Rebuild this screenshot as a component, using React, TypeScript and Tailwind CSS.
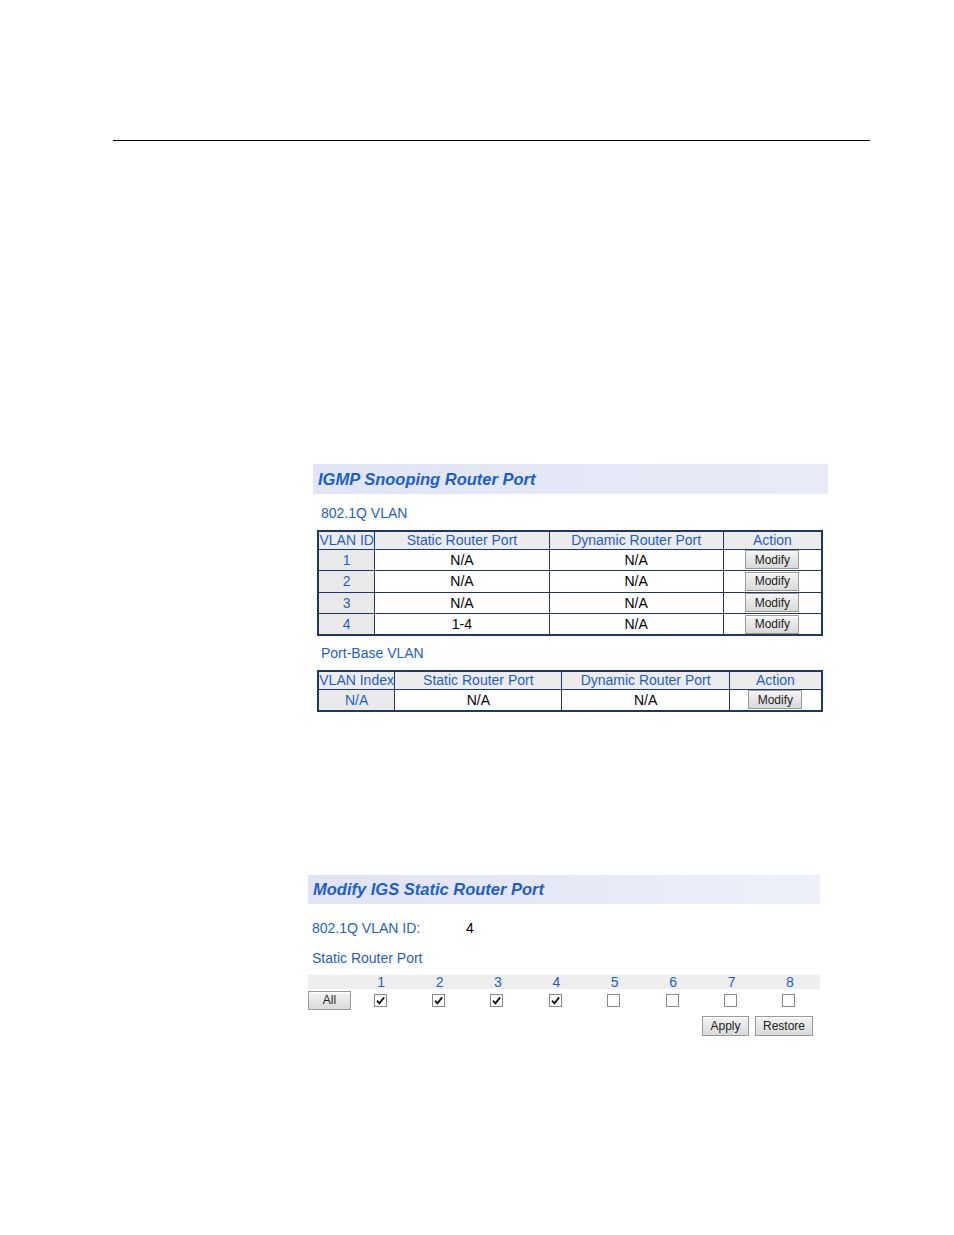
import React from "react";

const blue = "text-[#1c5fcc]";

function Btn({ label, className = "" }: { label: string; className?: string }) {
  return (
    <button
      className={`border border-[#9a9a9a] bg-gradient-to-b from-[#f4f4f4] to-[#d9d9d9] text-[12px] text-[#222] leading-none shadow-[inset_0_1px_0_#fff] ${className}`}
    >
      {label}
    </button>
  );
}

function Check({ on }: { on: boolean }) {
  return (
    <span className="flex h-[13px] w-[13px] items-center justify-center border border-[#8a8a8a] bg-white">
      {on && (
        <svg viewBox="0 0 12 12" className="h-[11px] w-[11px]">
          <path d="M2.2 6.2 L4.8 9 L10 2.6" fill="none" stroke="#111" strokeWidth="2" />
        </svg>
      )}
    </span>
  );
}

type Row = { id: string; st: string; dy: string };

function RouterTable({ cols, rows }: { cols: number[]; rows: Row[] }) {
  const heads = ["", "Static Router Port", "Dynamic Router Port", "Action"];
  return (
    <table className="border-collapse border-2 border-[#1d3868] text-[14px] leading-none" style={{ width: 506 }}>
      <colgroup>
        {cols.map((w, i) => (
          <col key={i} style={{ width: w }} />
        ))}
      </colgroup>
      <tbody>
        <tr className="h-[18px]">
          {heads.map((h, i) => (
            <td key={i} className={`border border-[#1d3868] bg-[#ececec] p-0 text-center ${blue}`}>
              {i === 0 ? (rows[0].id === "N/A" ? "VLAN Index" : "VLAN ID") : h}
            </td>
          ))}
        </tr>
        {rows.map((r) => (
          <tr key={r.id} className="h-[21.5px]">
            <td className={`border border-[#1d3868] bg-[#e9e9e9] p-0 text-center ${blue}`}>{r.id}</td>
            <td className="border border-[#1d3868] bg-white p-0 text-center text-black">{r.st}</td>
            <td className="border border-[#1d3868] bg-white p-0 text-center text-black">{r.dy}</td>
            <td className="border border-[#1d3868] bg-white p-0">
              <div className="flex justify-center">
                <Btn label="Modify" className="h-[19px] w-[54px]" />
              </div>
            </td>
          </tr>
        ))}
      </tbody>
    </table>
  );
}

export default function App() {
  const vlanRows: Row[] = [
    { id: "1", st: "N/A", dy: "N/A" },
    { id: "2", st: "N/A", dy: "N/A" },
    { id: "3", st: "N/A", dy: "N/A" },
    { id: "4", st: "1-4", dy: "N/A" },
  ];
  const ports = [1, 2, 3, 4, 5, 6, 7, 8];

  return (
    <div className="h-[1235px] w-[954px] bg-white font-['Liberation_Sans',Arial,sans-serif]">
      <div className="pt-[140px] pl-[113px]">
        <div className="h-px w-[757px] bg-black" />
      </div>

      {/* IGMP Snooping Router Port */}
      <div className="ml-[313px] mt-[323px] w-[515px]">
        <div className="flex h-[30px] items-center bg-gradient-to-r from-[#e2e5f5] to-[#e8eaf7] pl-[5px]">
          <span className={`text-[16.5px] font-bold italic ${blue}`}>IGMP Snooping Router Port</span>
        </div>
        <div className={`mt-[12px] pl-[8px] text-[14px] leading-none ${blue}`}>802.1Q VLAN</div>
        <div className="mt-[10px] pl-[4px]">
          <RouterTable cols={[57, 175, 175, 99]} rows={vlanRows} />
        </div>
        <div className={`mt-[10px] pl-[8px] text-[14px] leading-none ${blue}`}>Port-Base VLAN</div>
        <div className="mt-[10px] pl-[4px]">
          <RouterTable cols={[77, 168, 168, 93]} rows={[{ id: "N/A", st: "N/A", dy: "N/A" }]} />
        </div>
      </div>

      {/* Modify IGS Static Router Port */}
      <div className="ml-[308px] mt-[163px] w-[512px]">
        <div className="flex h-[29px] items-center bg-gradient-to-r from-[#e1e4f5] via-[#e6e8f6] to-[#eef0f9] pl-[5px]">
          <span className={`text-[16.5px] font-bold italic ${blue}`}>Modify IGS Static Router Port</span>
        </div>
        <div className={`mt-[17px] flex pl-[4px] text-[14px] leading-none ${blue}`}>
          <span className="w-[154px]">802.1Q VLAN ID:</span>
          <span className="text-black">4</span>
        </div>
        <div className={`mt-[16px] pl-[4px] text-[14px] leading-none ${blue}`}>Static Router Port</div>
        <div className={`mt-[10px] flex h-[14px] items-center bg-[#eeeeee] text-[14px] leading-none ${blue}`}>
          <div className="w-[44px]" />
          {ports.map((p) => (
            <div key={p} className="w-[58.4px] text-center">
              {p}
            </div>
          ))}
        </div>
        <div className="mt-[2px] flex h-[19px] items-center">
          <Btn label="All" className="h-[19px] w-[43px]" />
          {ports.map((p) => (
            <div key={p} className="flex w-[58.4px] justify-center">
              <Check on={p <= 4} />
            </div>
          ))}
        </div>
        <div className="mt-[6px] flex justify-end gap-[6px] pr-[7px]">
          <Btn label="Apply" className="h-[20px] w-[47px]" />
          <Btn label="Restore" className="h-[20px] w-[58px]" />
        </div>
      </div>
    </div>
  );
}
